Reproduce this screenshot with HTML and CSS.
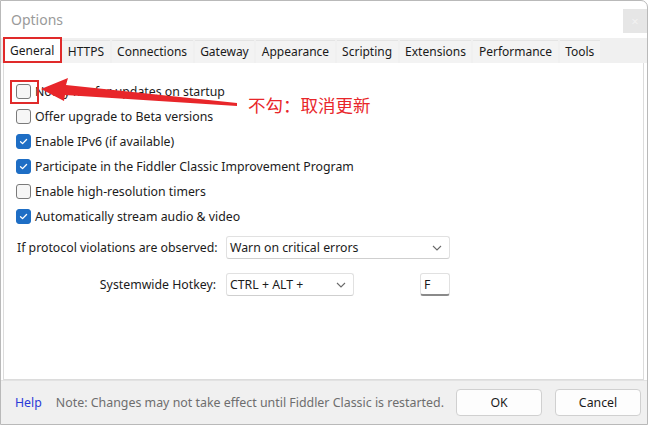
FILE: index.html
```html
<!DOCTYPE html>
<html>
<head>
<meta charset="utf-8">
<link rel="stylesheet" href="styles.css">
</head>
<body>
<div class="window">
  <div class="titlebar">
    <span class="title">Options</span>
    <span class="close">×</span>
  </div>
  <div class="tabs">
    <span class="tab active">General</span>
    <span class="tab">HTTPS</span>
    <span class="tab">Connections</span>
    <span class="tab">Gateway</span>
    <span class="tab">Appearance</span>
    <span class="tab">Scripting</span>
    <span class="tab">Extensions</span>
    <span class="tab">Performance</span>
    <span class="tab">Tools</span>
  </div>
  <div class="panel">
    <div class="checks">
      <label class="row"><span class="cb"></span>Notify me for updates on startup</label>
      <label class="row"><span class="cb"></span>Offer upgrade to Beta versions</label>
      <label class="row"><span class="cb on"><svg viewBox="0 0 14 14"><path d="M3.8 7.2 L6 9.3 L10.3 4.8"/></svg></span>Enable IPv6 (if available)</label>
      <label class="row"><span class="cb on"><svg viewBox="0 0 14 14"><path d="M3.8 7.2 L6 9.3 L10.3 4.8"/></svg></span>Participate in the Fiddler Classic Improvement Program</label>
      <label class="row"><span class="cb"></span>Enable high-resolution timers</label>
      <label class="row"><span class="cb on"><svg viewBox="0 0 14 14"><path d="M3.8 7.2 L6 9.3 L10.3 4.8"/></svg></span>Automatically stream audio &amp; video</label>
    </div>
    <div class="field protocol">
      <span class="flabel">If protocol violations are observed:</span>
      <span class="select wide">Warn on critical errors<svg class="chev" viewBox="0 0 10 6"><path d="M1 1 L5 5 L9 1"/></svg></span>
    </div>
    <div class="field hotkey">
      <span class="flabel hk">Systemwide Hotkey:</span>
      <span class="select narrow">CTRL + ALT +<svg class="chev" viewBox="0 0 10 6"><path d="M1 1 L5 5 L9 1"/></svg></span>
      <span class="keybox">F</span>
    </div>
  </div>
  <div class="footer">
    <span class="help">Help</span>
    <span class="note">Note: Changes may not take effect until Fiddler Classic is restarted.</span>
    <span class="btn">OK</span>
    <span class="btn">Cancel</span>
  </div>

  <div class="ann-tab"></div>
  <div class="ann-box"></div>
  <svg class="ann-arrow" viewBox="0 0 650 425">
    <polygon points="41,89 68,78 66,85 237,103 237,106 65,95 64,101"/>
  </svg>
  <span class="ann-text">不勾：取消更新</span>
</div>
</body>
</html>
```
FILE: styles.css
```css
* { box-sizing: border-box; }
html, body { margin: 0; padding: 0; background: #ffffff; }
body {
  font-family: "Noto Sans", "Open Sans", sans-serif;
  font-size: 12.3px;
  color: #1b1b1b;
}
.window {
  position: relative;
  width: 648px;
  height: 425px;
  border: 1px solid #b9b9b9;
  border-radius: 0 7px 0 0;
  display: flex;
  flex-direction: column;
  background: #ffffff;
  overflow: hidden;
}
.titlebar {
  height: 37px;
  display: flex;
  align-items: center;
  justify-content: space-between;
  padding: 0 0 0 10px;
}
.title {
  font-size: 14px;
  color: #9a9a9a;
}
.close {
  width: 24px;
  height: 24px;
  margin-top: 2px;
  background: #e6e6e6;
  color: #f2f2f2;
  display: flex;
  align-items: center;
  justify-content: center;
  font-size: 13px;
}
.tabs {
  height: 25px;
  background: #f0f0f0;
  display: flex;
  align-items: stretch;
  padding: 2px 0 0 2px;
  gap: 2px;
}
.tab {
  display: flex;
  align-items: center;
  padding: 0 5.5px 1px;
  font-size: 12px;
  background: #f3f3f3;
  color: #1a1a1a;
  border-top: 1px solid #e4e4e4;
}
.tab.active {
  background: #ffffff;
  margin-top: -2px;
  padding: 0 6px 1px 7px;
}
.panel {
  flex: 1;
  background: #ffffff;
  margin: 0 3px 0 2px;
  border: 1px solid #dcdcdc;
  border-top: none;
  padding: 16px 0 0 13px;
}
.checks {
  display: flex;
  flex-direction: column;
}
.row {
  height: 25px;
  display: flex;
  align-items: center;
  gap: 4px;
}
.cb {
  width: 15px;
  height: 15px;
  margin-left: -1px;
  border: 1px solid #7a7a7a;
  border-radius: 3px;
  background: #f6f6f6;
  display: flex;
}
.cb.on {
  background: #1e6ec5;
  border-color: #1e6ec5;
}
.cb svg { width: 13px; height: 13px; }
.cb svg path { fill: none; stroke: #ffffff; stroke-width: 1.4; stroke-linecap: round; stroke-linejoin: round; }
.field {
  display: flex;
  align-items: center;
}
.protocol { margin-top: 7px; }
.hotkey { margin-top: 14px; }
.flabel { flex: 0 0 209px; white-space: nowrap; }
.hk { text-align: right; padding-right: 10px; }
.select {
  height: 23px;
  border: 1px solid #e1e1e1;
  border-bottom-color: #cfcfcf;
  border-radius: 3px;
  background: #ffffff;
  display: flex;
  align-items: center;
  justify-content: space-between;
  padding: 0 7px 0 3px;
}
.wide { width: 224px; }
.narrow { width: 128px; }
.chev { width: 10px; height: 6px; }
.chev path { fill: none; stroke: #6a6a6a; stroke-width: 1.1; }
.keybox {
  margin-left: 66px;
  width: 30px;
  height: 23px;
  border: 1px solid #e1e1e1;
  border-bottom: 2px solid #8a8a8a;
  border-radius: 3px;
  display: flex;
  align-items: center;
  padding-left: 3px;
}
.footer {
  height: 44px;
  background: #f0f0f0;
  display: flex;
  align-items: center;
  padding: 0 6px 0 14px;
  border-top: 1px solid #e2e2e2;
}
.help { color: #2a3bd8; margin-right: 14px; }
.note { color: #6e6e6e; flex: 1 1 0; min-width: 0; white-space: nowrap; font-size: 12.4px; }
.btn {
  flex: 0 0 86px;
  height: 27px;
  border: 1px solid #d0d0d0;
  border-radius: 4px;
  background: #fdfdfd;
  display: flex;
  align-items: center;
  justify-content: center;
  color: #1a1a1a;
  margin-left: 13px;
}
.ann-tab {
  position: absolute;
  left: 2px;
  top: 36px;
  width: 59px;
  height: 26px;
  border: 2px solid #e02a2a;
}
.ann-box {
  position: absolute;
  left: 9px;
  top: 79px;
  width: 29px;
  height: 24px;
  border: 2px solid #e02a2a;
}
.ann-arrow {
  position: absolute;
  left: -1px;
  top: -1px;
  width: 650px;
  height: 425px;
  pointer-events: none;
}
.ann-arrow polygon { fill: #e8262a; }
.ann-text {
  position: absolute;
  left: 247px;
  top: 92px;
  font-family: "Noto Sans CJK SC", sans-serif;
  font-size: 17.5px;
  line-height: 24px;
  color: #e8262a;
}
```
